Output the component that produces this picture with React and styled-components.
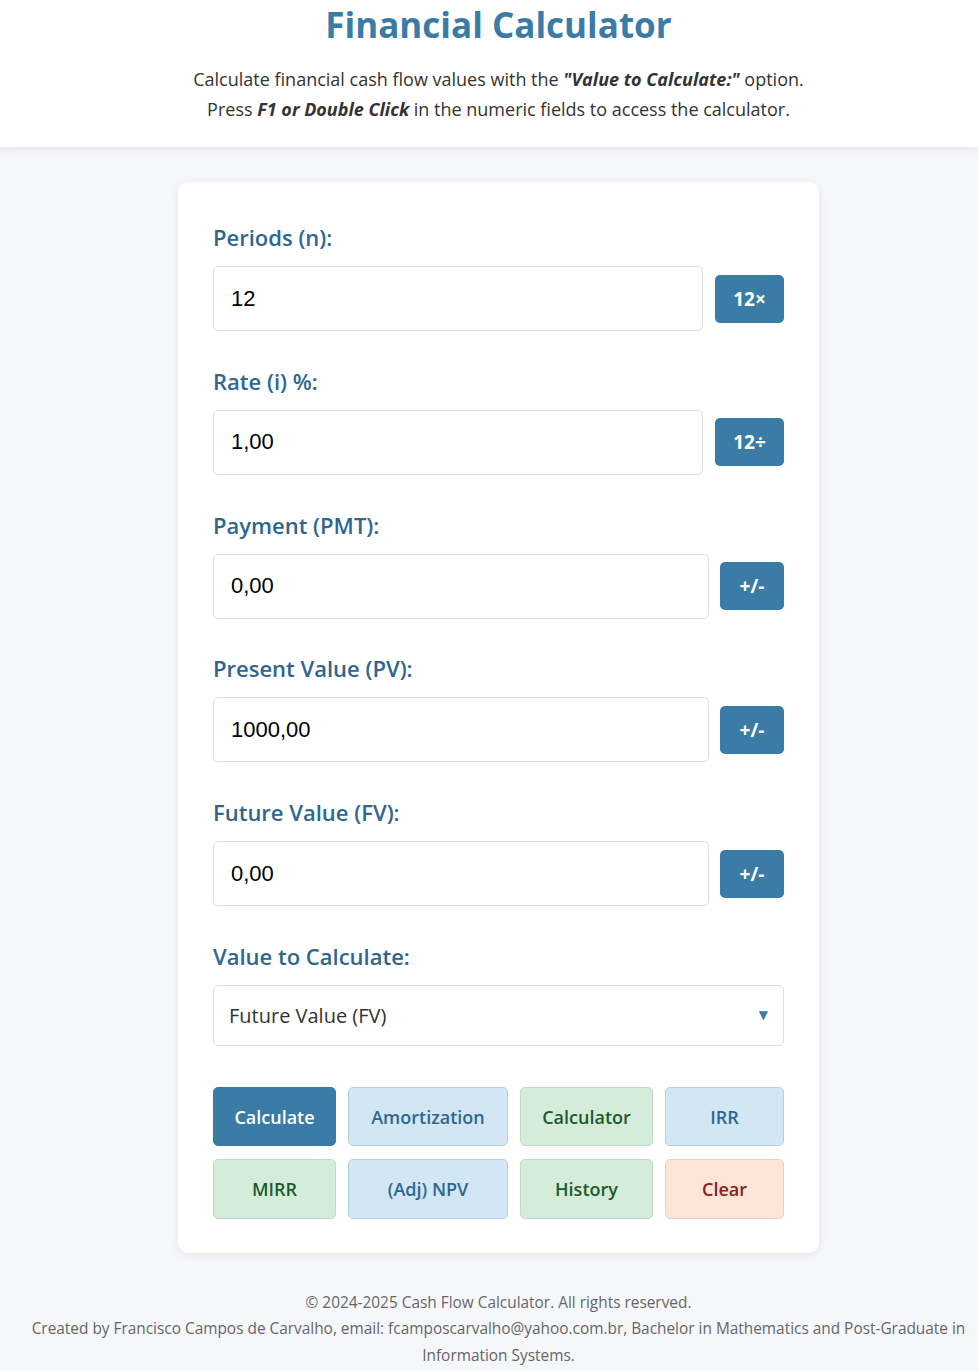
import React from "react";
import styled, { createGlobalStyle } from "styled-components";

const Global = createGlobalStyle`
  html, body { margin: 0; padding: 0; }
  body {
    background: #f5f7fa;
    font-family: "Open Sans", "Noto Sans", sans-serif;
    color: #333;
  }
`;

const Page = styled.div`
  padding-left: 19px;
`;

const Header = styled.header`
  background: #fff;
  text-align: center;
  margin-left: -19px;
  padding: 0 0 23px 19px;
  box-shadow: 0 2px 8px rgba(0, 0, 0, 0.08);
`;

const Title = styled.h1`
  margin: 0 0 14px;
  font-size: 35px;
  line-height: 50px;
  font-weight: 700;
  color: #3a7ca5;
`;

const Sub = styled.p`
  margin: 0;
  font-size: 18px;
  line-height: 30px;
  color: #333;
  b { font-style: italic; font-weight: 700; }
`;

const Card = styled.main`
  width: 641px;
  box-sizing: border-box;
  margin: 35px auto 0;
  background: #fff;
  border-radius: 10px;
  box-shadow: 0 2px 10px rgba(0, 0, 0, 0.08);
  padding: 40px 35px 34px;
`;

const Group = styled.div`
  margin-bottom: 34.8px;
`;

const Label = styled.label`
  display: block;
  font-size: 22px;
  line-height: 30px;
  font-weight: 600;
  color: #2f6690;
  margin-bottom: 14px;
`;

const Row = styled.div`
  display: flex;
  align-items: center;
  gap: ${(p) => p.$gap || 12}px;
`;

const Input = styled.input`
  flex: 1;
  min-width: 0;
  height: 65px;
  box-sizing: border-box;
  border: 1px solid #dcdde3;
  border-radius: 5px;
  padding: 0 17px;
  font-family: "Liberation Sans", Arial, sans-serif;
  font-size: 22px;
  color: #000;
  background: #fff;
  outline: none;
`;

const SmallBtn = styled.button`
  width: ${(p) => p.$w}px;
  height: 48px;
  border: none;
  border-radius: 5px;
  background: #3a7ca5;
  color: #fff;
  font-family: "Open Sans", "Noto Sans", sans-serif;
  font-size: 19px;
  font-weight: 700;
  padding: 0;
  flex-shrink: 0;
`;

const SelectBox = styled.div`
  height: 61px;
  box-sizing: border-box;
  border: 1px solid #dcdde3;
  border-radius: 5px;
  display: flex;
  align-items: center;
  padding: 0 15px;
  font-size: 20px;
  color: #333;
`;

const Arrow = styled.span`
  margin-left: auto;
  color: #3a7ca5;
  font-size: 12px;
  font-family: "DejaVu Sans", sans-serif;
`;

const Buttons = styled.div`
  margin-top: 41px;
  display: grid;
  grid-template-columns: 123fr 160fr 133fr 119fr;
  column-gap: 12px;
  row-gap: 13px;
`;

const tones = {
  primary: { bg: "#3a7ca5", fg: "#fff", bd: "#3a7ca5" },
  blue: { bg: "#d2e6f4", fg: "#2f6690", bd: "#b3cfe2" },
  green: { bg: "#d5ecdb", fg: "#1d5a2c", bd: "#bcdcc4" },
  red: { bg: "#fde5d6", fg: "#85211d", bd: "#f6c8c4" },
};

const ActionBtn = styled.button`
  height: 59.5px;
  border-radius: 5px;
  border: 1px solid ${(p) => tones[p.$tone].bd};
  background: ${(p) => tones[p.$tone].bg};
  color: ${(p) => tones[p.$tone].fg};
  font-family: "Open Sans", "Noto Sans", sans-serif;
  font-size: 18px;
  font-weight: 600;
  padding: 0;
`;

const Footer = styled.footer`
  text-align: center;
  padding: 37px 0 4px;
  font-size: 15.4px;
  line-height: 26.5px;
  color: #666;
`;

const fields = [
  { label: "Periods (n):", value: "12", btn: "12×", w: 69, gap: 12 },
  { label: "Rate (i) %:", value: "1,00", btn: "12÷", w: 69, gap: 12 },
  { label: "Payment (PMT):", value: "0,00", btn: "+/-", w: 64, gap: 11 },
  { label: "Present Value (PV):", value: "1000,00", btn: "+/-", w: 64, gap: 11 },
  { label: "Future Value (FV):", value: "0,00", btn: "+/-", w: 64, gap: 11 },
];

const actions = [
  ["Calculate", "primary"],
  ["Amortization", "blue"],
  ["Calculator", "green"],
  ["IRR", "blue"],
  ["MIRR", "green"],
  ["(Adj) NPV", "blue"],
  ["History", "green"],
  ["Clear", "red"],
];

export default function App() {
  return (
    <Page>
      <Global />
      <Header>
        <Title>Financial Calculator</Title>
        <Sub>
          Calculate financial cash flow values with the <b>"Value to Calculate:"</b> option.
        </Sub>
        <Sub>
          Press <b>F1 or Double Click</b> in the numeric fields to access the calculator.
        </Sub>
      </Header>
      <Card>
        {fields.map((f) => (
          <Group key={f.label}>
            <Label>{f.label}</Label>
            <Row $gap={f.gap}>
              <Input defaultValue={f.value} />
              <SmallBtn $w={f.w}>{f.btn}</SmallBtn>
            </Row>
          </Group>
        ))}
        <Label>Value to Calculate:</Label>
        <SelectBox>
          Future Value (FV)
          <Arrow>▼</Arrow>
        </SelectBox>
        <Buttons>
          {actions.map(([t, tone]) => (
            <ActionBtn key={t} $tone={tone}>
              {t}
            </ActionBtn>
          ))}
        </Buttons>
      </Card>
      <Footer>
        <div>© 2024-2025 Cash Flow Calculator. All rights reserved.</div>
        <div>
          Created by Francisco Campos de Carvalho, email: fcamposcarvalho@yahoo.com.br, Bachelor in
          Mathematics and Post-Graduate in Information Systems.
        </div>
      </Footer>
    </Page>
  );
}
